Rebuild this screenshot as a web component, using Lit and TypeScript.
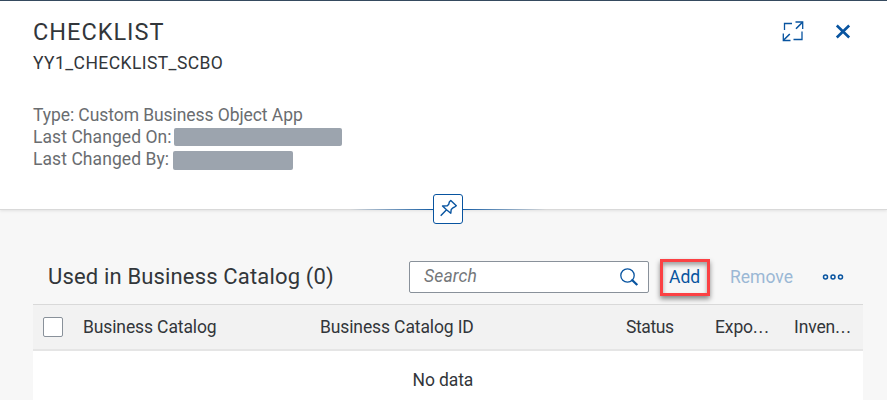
import { LitElement, html, css } from "lit";
import { customElement } from "lit/decorators.js";

@customElement("app-root")
export class AppRoot extends LitElement {
  static styles = css`
    :host { display: flex; flex-direction: column; width: 887px; height: 400px; overflow: hidden; box-sizing: border-box; background: #f7f7f7; color: #32363a; font: 17.5px/22px Roboto, "Noto Sans", sans-serif; white-space: nowrap; }
    * { box-sizing: border-box; }
    svg { display: block; fill: none; stroke: #0854a0; }
    .head { position: relative; flex: none; height: 210px; padding: 17px 33px 0; background: #fff; border-top: 1px solid #354a5f; border-bottom: 1px solid #d9d9d9; box-shadow: 0 1px 3px rgba(0,0,0,.09); display: flex; justify-content: space-between; }
    h1 { margin: 0; font-size: 23.5px; line-height: 28px; font-weight: 400; letter-spacing: 1px; }
    .sub { margin-top: 6px; letter-spacing: .42px; }
    .meta { margin-top: 30px; color: #6a6d70; }
    .type { letter-spacing: -.07px; }
    .label { letter-spacing: .07px; }
    .row { display: flex; align-items: center; height: 22px; }
    .label { width: 138px; flex: none; }
    .redact { background: #9ca4ae; border-radius: 2px; height: 18px; width: 168px; margin-left: 3px; }
    .redact.short { width: 120px; height: 19px; margin: 2px 0 0 2px; }
    .actions { display: flex; gap: 30px; padding-top: 3px; margin-right: 2px; }
    .line { position: absolute; left: 350px; top: 208px; width: 196px; height: 1px; background: linear-gradient(90deg, transparent, #0854a0 45%, #0854a0 55%, transparent); }
    .pin { position: absolute; left: 433px; top: 193px; width: 30px; height: 30px; background: #fff; border: 1px solid #0854a0; border-radius: 3px; }
    .panel { margin: 43px 24px 0 33px; flex: 1; display: flex; flex-direction: column; }
    .bar { height: 51px; display: flex; align-items: flex-start; padding: 8px 0 0 15px; }
    h2 { margin: 0; width: 361px; font-size: 22px; line-height: 32px; font-weight: 400; letter-spacing: .16px; }
    .search { width: 240px; height: 32px; background: #fff; border: 1px solid #89919a; border-radius: 2px; padding: 0 9px 0 14px; display: flex; align-items: center; justify-content: space-between; color: #74777a; font-style: italic; }
    .hint { margin-top: -2px; letter-spacing: .15px; }
    .add { margin: -2px 0 0 11px; width: 50px; height: 37px; border: 3px solid #fb4144; box-shadow: 0 3px 5px rgba(0,0,0,.45), inset 0 3px 4px rgba(0,0,0,.35); color: #0854a0; line-height: 30px; padding-left: 6px; }
    .remove { color: #9bb8d5; line-height: 32px; margin-left: 20px; width: 92px; }
    .more { margin-top: 12px; }
    .cols { height: 47px; background: #f2f2f2; border-top: 1px solid #d9d9d9; border-bottom: 2px solid #e5e5e5; display: grid; grid-template-columns: 40px 237px 305px 90px 79px 1fr; align-items: center; padding-left: 10px; letter-spacing: -.12px; }
    .status { letter-spacing: -.4px; padding-left: 1px; }
    .dots { letter-spacing: 1px; }
    .box { width: 20px; height: 20px; background: #fff; border: 1px solid #89919a; border-radius: 2px; }
    .empty { flex: 1; background: #fff; padding: 18px 0 0 379.5px; letter-spacing: -.1px; }
  `;

  render() {
    return html`
      <header class="head">
        <div>
          <h1>CHECKLIST</h1>
          <div class="sub">YY1_CHECKLIST_SCBO</div>
          <div class="meta">
            <div class="row type">Type: Custom Business Object App</div>
            <div class="row"><span class="label">Last Changed On:</span><span class="redact"></span></div>
            <div class="row"><span class="label">Last Changed By:</span><span class="redact short"></span></div>
          </div>
        </div>
        <div class="actions">
          <svg width="22" height="22" viewBox="0 0 22 22" stroke-width="1.3"><path d="M2.5 9V2.5H10M20 10.5V18.5H11.5M13.5 1H20.7V8M1.3 12.5V19.5H8.5"/><path d="M20.5 1.2L14 7.8M1.5 19.3L7.8 13" stroke-width="1.6"/></svg>
          <svg width="18" height="22" viewBox="0 0 18 22" stroke-width="2.6"><path d="M2.8 4.5L15.2 16.5M15.2 4.5L2.8 16.5"/></svg>
        </div>
        <div class="line"></div>
        <div class="pin"><svg width="28" height="28" viewBox="0 0 28 28" stroke-width="1.4" stroke-linejoin="round"><path d="M16.8 5.5L22.3 10.7L20.3 12.2L18.5 13.2L17.2 14.5L16.8 18.2L12.5 14.7L8.5 11L13.3 10.8L14.8 9.2L15.3 7ZM12.3 14.9L6.7 20.7"/></svg></div>
      </header>
      <section class="panel">
        <div class="bar">
          <h2>Used in Business Catalog (0)</h2>
          <div class="search"><span class="hint">Search</span><svg width="20" height="20" viewBox="0 0 20 20"><circle cx="8.5" cy="8.5" r="6.7" stroke-width="1.3"/><path d="M12.5 12.5L18.3 18" stroke-width="2.3"/></svg></div>
          <div class="add">Add</div>
          <div class="remove">Remove</div>
          <svg class="more" width="22" height="8" viewBox="0 0 22 8" stroke-width="1.5"><circle cx="3.5" cy="4" r="2"/><circle cx="11" cy="4" r="2"/><circle cx="18.5" cy="4" r="2"/></svg>
        </div>
        <div class="cols"><span class="box"></span><span>Business Catalog</span><span>Business Catalog ID</span><span class="status">Status</span><span>Expo<span class="dots">...</span></span><span>Inven<span class="dots">...</span></span></div>
        <div class="empty">No data</div>
      </section>`;
  }
}
